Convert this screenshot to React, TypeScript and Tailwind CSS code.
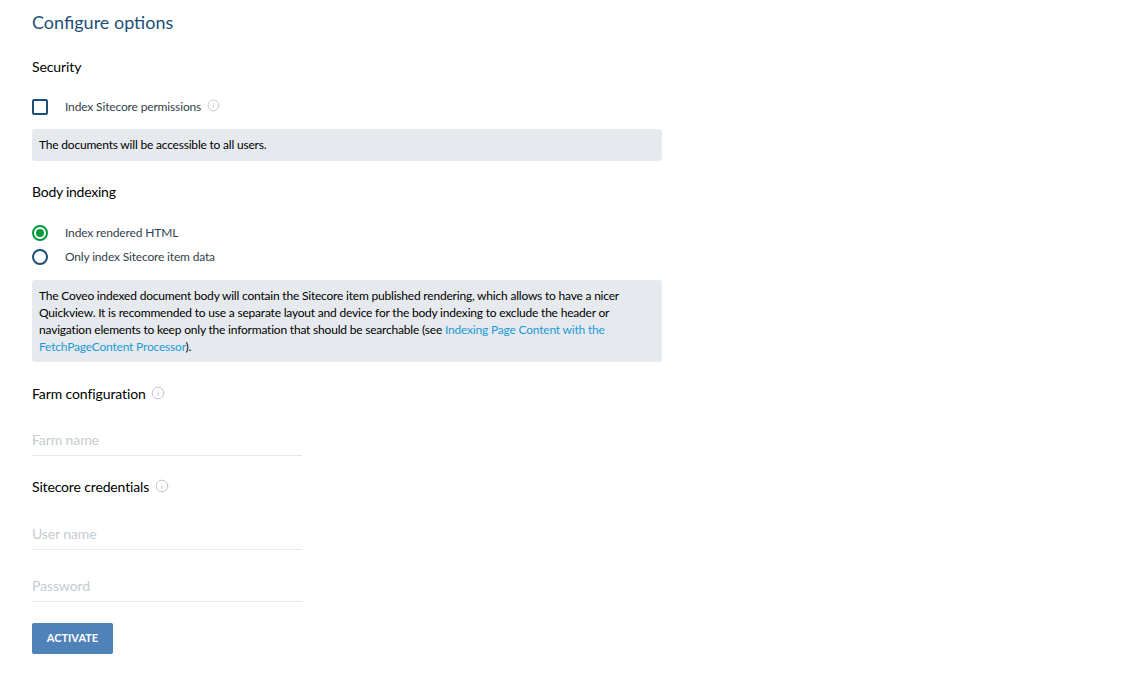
import { Info } from 'lucide-react'

const InfoIcon = ({ size = 13 }: { size?: number }) => (
  <Info size={size} strokeWidth={1.5} className="text-[#b7bec6]" />
)

const Field = ({ placeholder, className }: { placeholder: string; className: string }) => (
  <div className={`flex h-[31px] w-[270px] items-center border-b border-[#e5e8ec] text-sm tracking-[-0.1px] text-[#c5ccd3] ${className}`}>
    {placeholder}
  </div>
)

export default function App() {
  return (
    <div className="h-[683px] w-[1130px] overflow-hidden bg-white pl-8 font-['Lato',sans-serif] text-black">
      <h1 className="pt-[10px] text-lg leading-6 text-[#1d4f76]">Configure options</h1>

      <h2 className="mt-[23px] text-sm leading-[20px] tracking-[-0.1px]">Security</h2>
      <div className="mt-[22px] flex h-4 items-center">
        <div className="h-4 w-4 rounded-[2px] border-2 border-[#1d4f76]" />
        <span className="ml-[17px] text-xs tracking-[-0.15px] text-[#333f4c]">Index Sitecore permissions</span>
        <span className="mb-1 ml-[6px]"><InfoIcon /></span>
      </div>
      <div className="mt-[14px] flex h-8 w-[630px] items-center rounded-[3px] bg-[#e6eaee] px-[7px] text-xs tracking-[-0.2px]">
        The documents will be accessible to all users.
      </div>

      <h2 className="mt-[21px] text-sm leading-[20px] tracking-[-0.25px]">Body indexing</h2>
      <div className="mt-[23px] flex h-4 items-center">
        <div className="flex h-4 w-4 items-center justify-center rounded-full border-2 border-[#009a3d]">
          <div className="h-2 w-2 rounded-full bg-[#009a3d]" />
        </div>
        <span className="ml-[17px] text-xs tracking-[-0.15px] text-[#333f4c]">Index rendered HTML</span>
      </div>
      <div className="mt-[8px] flex h-4 items-center">
        <div className="h-4 w-4 rounded-full border-2 border-[#1d4f76]" />
        <span className="ml-[17px] text-xs tracking-[-0.17px] text-[#333f4c]">Only index Sitecore item data</span>
      </div>
      <div className="mt-[15px] h-[82px] w-[630px] rounded-[3px] bg-[#e6eaee] px-[7px] pt-[7px] text-xs leading-[17px] tracking-[-0.2px]">
        The Coveo indexed document body will contain the Sitecore item published rendering, which allows to have a nicer
        Quickview. It is recommended to use a separate layout and device for the body indexing to exclude the header or
        navigation elements to keep only the information that should be searchable (see{' '}
        <a className="text-[#1c9ad6]">Indexing Page Content with the FetchPageContent Processor</a>).
      </div>

      <div className="mt-[22px] flex h-5 items-center text-sm tracking-[-0.1px]">
        Farm configuration
        <span className="mb-[2px] ml-[5px]"><InfoIcon size={14} /></span>
      </div>
      <Field placeholder="Farm name" className="mt-[21px]" />

      <div className="mt-[21px] flex h-5 items-center text-sm tracking-[-0.15px]">
        Sitecore credentials
        <span className="mb-[2px] ml-[6px]"><InfoIcon size={14} /></span>
      </div>
      <Field placeholder="User name" className="mt-[22px]" />
      <Field placeholder="Password" className="mt-[21px]" />

      <button
        type="button"
        className="mt-[21px] h-[31px] w-[81px] rounded-[2px] bg-[#4f82b8] text-[11px] font-bold text-white"
      >
        ACTIVATE
      </button>
    </div>
  )
}
